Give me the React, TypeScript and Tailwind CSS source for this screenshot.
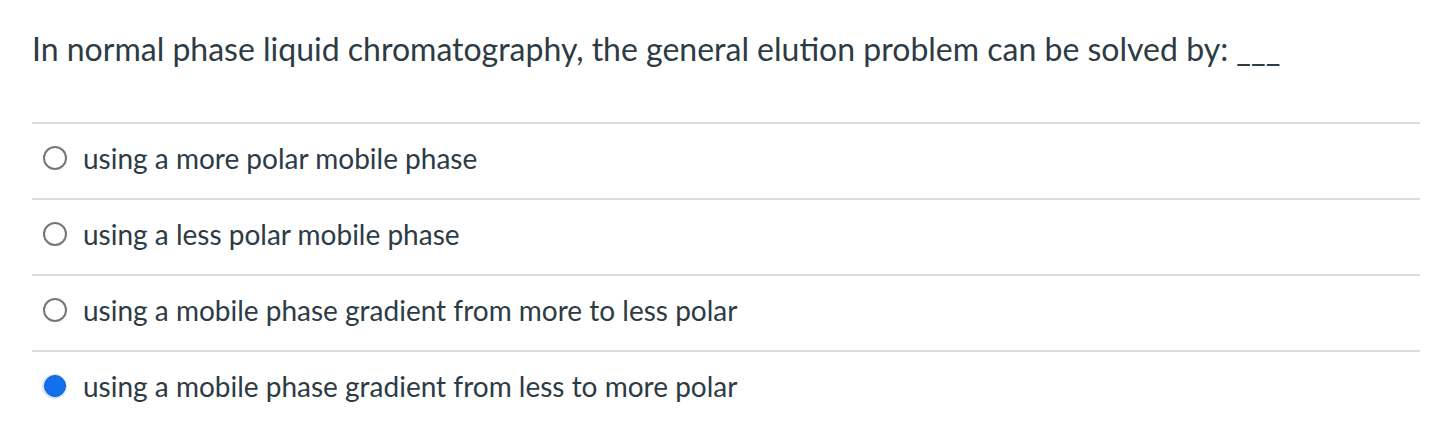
const OPTIONS = [
  { label: 'using a more polar mobile phase', checked: false },
  { label: 'using a less polar mobile phase', checked: false },
  { label: 'using a mobile phase gradient from more to less polar', checked: false },
  { label: 'using a mobile phase gradient from less to more polar', checked: true },
];

function Radio({ checked }: { checked: boolean }) {
  if (checked) {
    return (
      <span className="flex h-[25px] w-[25px] items-center justify-center rounded-full bg-[#d5e4fa]">
        <span className="h-[22px] w-[22px] rounded-full border-[1.5px] border-[#1b5fc2] bg-[#1170ee]" />
      </span>
    );
  }

  return (
    <span className="flex h-[25px] w-[25px] items-center justify-center">
      <span className="h-[24px] w-[24px] rounded-full border-2 border-[#767676] bg-white" />
    </span>
  );
}

export default function App() {
  return (
    <div className="h-[448px] w-[1438px] bg-white pl-[32px] pr-[18px] pt-[29px] font-['Lato',sans-serif] text-[#2d3b45]">
      <div className="text-[32px] leading-[40px]">
        In normal phase liquid chromatography, the general elution problem can be solved by: ___
      </div>
      <div className="mt-[53px]">
        {OPTIONS.map((option) => (
          <label
            key={option.label}
            className="flex h-[76px] items-center gap-[16px] border-t-2 border-[#dcdcdc] pb-[6px] pl-[10px]"
          >
            <Radio checked={option.checked} />
            <span className="text-[28px] leading-[34px]">{option.label}</span>
          </label>
        ))}
      </div>
    </div>
  );
}
